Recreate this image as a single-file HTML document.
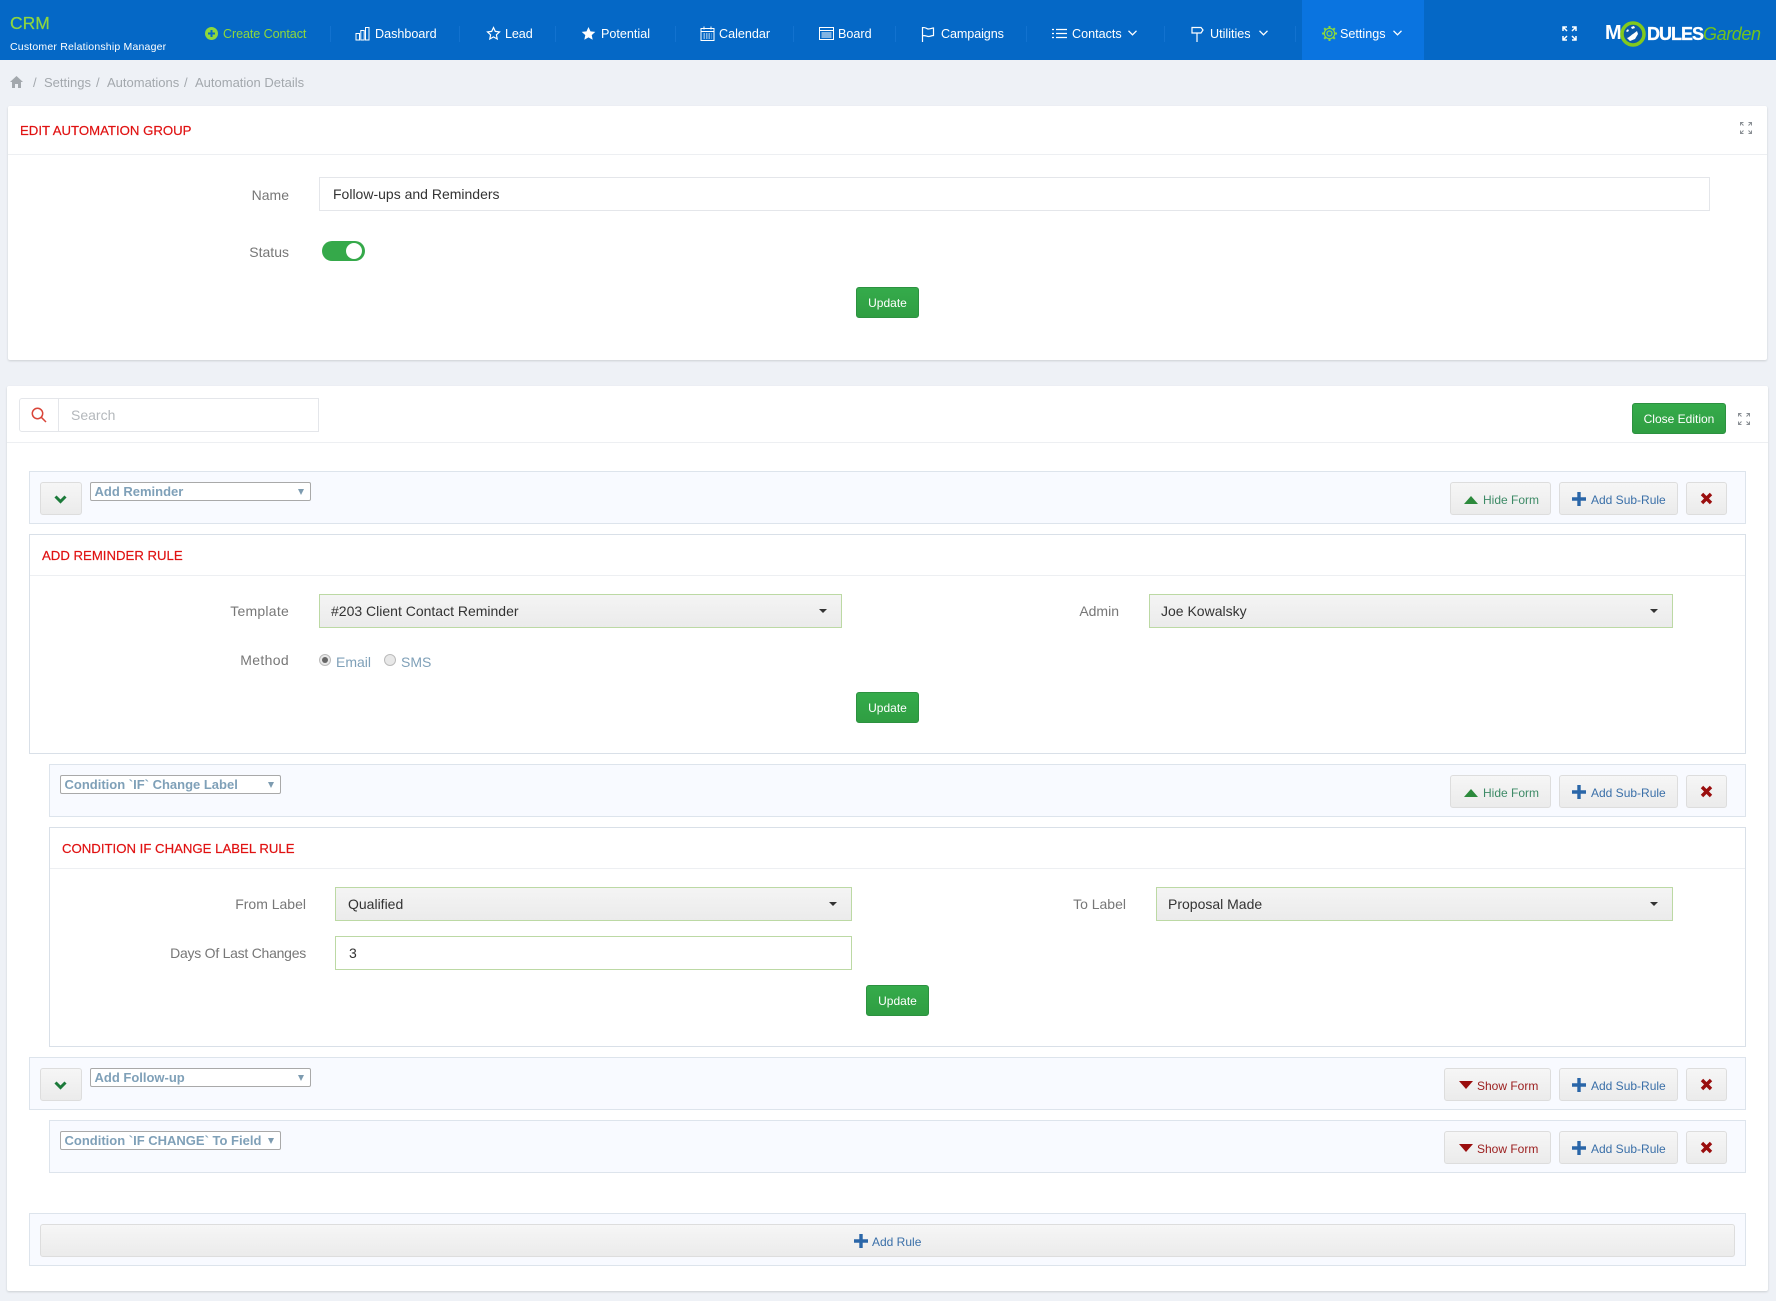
<!DOCTYPE html>
<html lang="en"><head><meta charset="utf-8"><title>CRM - Automation Details</title>
<style>
*{box-sizing:border-box}
html,body{margin:0;padding:0}
body{width:1776px;height:1301px;position:relative;overflow:hidden;background:#eef1f6;font-family:"Liberation Sans",Arial,sans-serif;color:#333}
.a{position:absolute}
.t{position:absolute;white-space:nowrap;height:20px;line-height:20px}
.n{font-size:12.6px;color:#fff}
.d{position:absolute;top:26px;width:1px;height:16px;background:#1272cf}
.b{font-size:13px;color:#a3a8ad}
.card{position:absolute;background:#fff;box-shadow:0 1px 2px rgba(0,0,0,.14);border-radius:2px}
.h{position:absolute;height:1px;background:#edeff2}
.l{font-size:14px;color:#777;text-align:right}
.title{font-size:13.2px;color:#e01212;-webkit-text-stroke:.2px #e01212}
.box{position:absolute;border:1px solid #dde4ec;background:#f8faff}
.pan{position:absolute;border:1px solid #d9e0e8;background:#fff}
.sel{position:absolute;height:34px;border:1px solid #bcd9a4;background:linear-gradient(#f4f4f4,#ebebeb);font-size:14px;color:#333;line-height:32px;padding-left:11px}
.sel i{position:absolute;top:14px;right:14.500px;border-left:4px solid transparent;border-right:4px solid transparent;border-top:4px solid #333}
.ns{position:absolute;height:19px;width:221px;border:1px solid #a9a9a9;border-radius:2px;background:#fff;font-size:13px;font-weight:bold;color:#7fa0b8;line-height:17px;padding-left:3.5px;white-space:nowrap}
.ns i{position:absolute;top:6px;right:6px;border-left:3.5px solid transparent;border-right:3.5px solid transparent;border-top:6px solid #7d9bb0}
.btn{position:absolute;height:33px;border:1px solid #ddd;border-radius:3px;background:linear-gradient(#f6f6f6,#ebebeb);font-size:12px;line-height:31px;white-space:nowrap}
.btn svg{position:absolute}
.btn span{position:absolute;top:1.5px}
.g{position:absolute;background:linear-gradient(#35ab4b,#2f9e42);border:1px solid #2c9140;border-radius:3px;color:#fff;font-size:12px;text-align:center;height:31px;line-height:30px}
.grn{color:#3d8a66}.blu{color:#3a6fa8}.red{color:#9a1c1c}
svg{display:block}
</style></head><body>

<!-- top bar -->
<div class="a" style="left:0;top:0;width:1776px;height:60px;background:#0568c6"></div>
<div class="a" style="left:1302px;top:0;width:122px;height:60px;background:#0a74e0"></div>
<div class="t" style="left:10px;top:13px;font-size:17.500px;color:#8fd63f;-webkit-text-stroke:.2px #8fd63f">CRM</div>
<div class="t" style="left:10px;top:37px;font-size:10.5px;color:#fff;letter-spacing:.2px">Customer Relationship Manager</div>

<svg class="a" style="left:205px;top:27px" width="13" height="13" viewBox="0 0 13 13"><circle cx="6.5" cy="6.5" r="6.5" fill="#8dd83c"/><path d="M6.5 3v7M3 6.5h7" stroke="#0568c6" stroke-width="2"/></svg>
<div class="t n" style="left:223px;top:24px;color:#8dd83c;letter-spacing:-.1px">Create Contact</div>
<div class="d" style="left:330px"></div>
<svg class="a" style="left:355px;top:26px" width="15" height="15" viewBox="0 0 15 15" fill="none" stroke="#fff"><path d="M1 7.500h3.500v6.500H1zM5.800 4.500h3.400v9.500H5.800zM10.500 1.500H14V14h-3.500z"/></svg>
<div class="t n" style="left:375px;top:24px">Dashboard</div>
<div class="d" style="left:459px"></div>
<svg class="a" style="left:486px;top:26px" width="15" height="15" viewBox="0 0 15 15"><path d="M7.500 1.500l1.800 3.900 4.200.5-3.100 2.900.8 4.200-3.700-2.100-3.700 2.100.8-4.200L1.500 5.900l4.200-.5z" fill="none" stroke="#fff" stroke-width="1.200"/></svg>
<div class="t n" style="left:505px;top:24px;letter-spacing:-.1px">Lead</div>
<div class="d" style="left:555px"></div>
<svg class="a" style="left:581px;top:26px" width="15" height="15" viewBox="0 0 15 15"><path d="M7.500 1l2 4.400 4.800.5-3.600 3.200 1 4.700-4.200-2.400-4.200 2.400 1-4.700L.7 5.900l4.800-.5z" fill="#fff"/></svg>
<div class="t n" style="left:601px;top:24px">Potential</div>
<div class="d" style="left:675px"></div>
<svg class="a" style="left:700px;top:26px" width="15" height="15" viewBox="0 0 15 15" fill="none" stroke="#fff"><rect x="1" y="2.500" width="13" height="12"/><path d="M4 .5v3M11 .5v3M1 5.500h13"/><path d="M3.500 8h8M3.500 10h8M3.500 12h8" stroke-dasharray="1.500 1"/></svg>
<div class="t n" style="left:719px;top:24px">Calendar</div>
<div class="d" style="left:793px"></div>
<svg class="a" style="left:819px;top:27px" width="15" height="13" viewBox="0 0 15 13" fill="none" stroke="#fff"><rect x=".5" y=".5" width="14" height="12"/><path d="M.5 3.500h14M2.500 6h10M2.500 8h10M2.500 10h10"/></svg>
<div class="t n" style="left:838px;top:24px">Board</div>
<div class="d" style="left:895px"></div>
<svg class="a" style="left:921px;top:26px" width="15" height="16" viewBox="0 0 15 16" fill="none" stroke="#fff" stroke-width="1.200"><path d="M1.500 1v15M1.500 1.800c3-1 4 1.200 6 1.200 2 0 3.500-1 5-1v7.500c-2 0-3 1-5 1s-3-1.500-6-.7"/></svg>
<div class="t n" style="left:941px;top:24px;letter-spacing:-.1px">Campaigns</div>
<div class="d" style="left:1026px"></div>
<svg class="a" style="left:1052px;top:28px" width="15" height="11" viewBox="0 0 15 11" fill="none" stroke="#fff" stroke-width="1.300"><path d="M0 1.500h2M4 1.500h11M0 5.500h2M4 5.500h11M0 9.500h2M4 9.500h11"/></svg>
<div class="t n" style="left:1072px;top:24px">Contacts</div>
<svg class="a" style="left:1128px;top:30px" width="9" height="6" viewBox="0 0 9 6" fill="none" stroke="#fff" stroke-width="1.300"><path d="M.5.800l4 4 4-4"/></svg>
<div class="d" style="left:1164px"></div>
<svg class="a" style="left:1190px;top:26px" width="14" height="16" viewBox="0 0 14 16" fill="none" stroke="#fff" stroke-width="1.200"><path d="M7 7.500V16M2 1.500h9l2 2.500-2 3H2z"/></svg>
<div class="t n" style="left:1210px;top:24px">Utilities</div>
<svg class="a" style="left:1259px;top:30px" width="9" height="6" viewBox="0 0 9 6" fill="none" stroke="#fff" stroke-width="1.300"><path d="M.5.800l4 4 4-4"/></svg>
<div class="d" style="left:1295px"></div>
<svg class="a" style="left:1322px;top:26px" width="15" height="15" viewBox="0 0 15 15" fill="none" stroke="#8dd83c" stroke-width="1.200"><circle cx="7.500" cy="7.500" r="2.500"/><circle cx="7.500" cy="7.500" r="5.200"/><path stroke-width="2" d="M7.500 0v2.300M7.500 12.700V15M0 7.500h2.300M12.700 7.500H15M2.200 2.200l1.600 1.600M11.200 11.200l1.600 1.600M2.200 12.800l1.600-1.600M11.200 3.800l1.600-1.600"/></svg>
<div class="t n" style="left:1340px;top:24px">Settings</div>
<svg class="a" style="left:1393px;top:30px" width="9" height="6" viewBox="0 0 9 6" fill="none" stroke="#fff" stroke-width="1.300"><path d="M.5.800l4 4 4-4"/></svg>

<svg class="a" style="left:1562px;top:26px" width="15" height="15" viewBox="0 0 15 15" fill="none" stroke="#fff" stroke-width="1.500"><path d="M1 5V1h4M1 1l4 4M14 5V1h-4M14 1l-4 4M1 10v4h4M1 14l4-4M14 10v4h-4M14 14l-4-4"/></svg>

<!-- logo -->
<div class="t" style="left:1605px;top:21px;height:24px;line-height:24px;font-size:20px;font-weight:bold;color:#fff;letter-spacing:-.5px">M</div>
<svg class="a" style="left:1619px;top:20px" width="28" height="28" viewBox="0 0 28 28"><circle cx="14" cy="14" r="11" fill="#0b5aa8" stroke="#82c91e" stroke-width="3.500"/><path d="M8 18c3-1 4-3 6-4l4-3 1 3-3 5-5 2z" fill="#fff"/><path d="M12 7l3-1 1 2-3 1zM7 11l2-2 1 2-2 1z" fill="#fff"/></svg>
<div class="t" style="left:1647px;top:22px;height:24px;line-height:24px;font-size:18px;font-weight:bold;color:#fff;letter-spacing:-1px;-webkit-text-stroke:.3px #fff">DULES</div>
<div class="t" style="left:1703px;top:22px;height:24px;line-height:24px;font-size:18px;font-style:italic;color:#72c21d;letter-spacing:-.4px">Garden</div>

<!-- breadcrumb -->
<svg class="a" style="left:10px;top:76px" width="13" height="12" viewBox="0 0 13 12"><path d="M6.500 0L13 6h-2v6H8V8H5v4H2V6H0z" fill="#a3a8ad"/></svg>
<div class="t b" style="left:33px;top:73px">/</div>
<div class="t b" style="left:44px;top:73px">Settings</div>
<div class="t b" style="left:96px;top:73px">/</div>
<div class="t b" style="left:107px;top:73px">Automations</div>
<div class="t b" style="left:184px;top:73px">/</div>
<div class="t b" style="left:195px;top:73px">Automation Details</div>

<!-- card 1 -->
<div class="card" style="left:8px;top:106px;width:1759px;height:254px"></div>
<div class="h" style="left:8px;top:154px;width:1759px"></div>
<div class="t title" style="left:20px;top:121px">EDIT AUTOMATION GROUP</div>
<svg class="a" style="left:1740px;top:122px" width="12" height="12" viewBox="0 0 12 12" fill="none" stroke="#8a8f94"><path d="M.5 3.500v-3h3M.5.500l3 3M11.500 3.500v-3h-3M11.500.500l-3 3M.5 8.500v3h3M.5 11.500l3-3M11.500 8.500v3h-3M11.500 11.500l-3-3"/></svg>
<div class="t l" style="right:1487px;top:185px">Name</div>
<div class="a" style="left:319px;top:177px;width:1391px;height:34px;border:1px solid #e4e6ea;font-size:14px;line-height:32px;padding-left:13px;color:#333">Follow-ups and Reminders</div>
<div class="t l" style="right:1487px;top:242px">Status</div>
<div class="a" style="left:322px;top:241px;width:43px;height:20px;border-radius:10px;background:#35a94a"></div>
<div class="a" style="left:346px;top:243px;width:16px;height:16px;border-radius:8px;background:#fff"></div>
<div class="g" style="left:856px;top:287px;width:63px">Update</div>

<!-- card 2 -->
<div class="card" style="left:7px;top:386px;width:1761px;height:905px"></div>
<div class="h" style="left:7px;top:442px;width:1761px"></div>
<div class="a" style="left:19px;top:398px;width:300px;height:34px;border:1px solid #e4e6ea;border-radius:3px 0 0 3px"></div>
<div class="a" style="left:58px;top:398px;width:1px;height:34px;background:#e4e6ea"></div>
<svg class="a" style="left:31px;top:407px" width="16" height="16" viewBox="0 0 16 16" fill="none" stroke="#d9463a" stroke-width="1.500"><circle cx="6.500" cy="6.500" r="5.200"/><path d="M10.300 10.300l4.700 4.700"/></svg>
<div class="t" style="left:71px;top:405px;font-size:14px;color:#b4b8bc">Search</div>
<div class="g" style="left:1632px;top:403px;width:94px;height:31px;line-height:30px">Close Edition</div>
<svg class="a" style="left:1738px;top:413px" width="12" height="12" viewBox="0 0 12 12" fill="none" stroke="#8a8f94"><path d="M.5 3.500v-3h3M.5.500l3 3M11.500 3.500v-3h-3M11.500.500l-3 3M.5 8.500v3h3M.5 11.500l3-3M11.500 8.500v3h-3M11.500 11.500l-3-3"/></svg>

<!-- row 1 -->
<div class="box" style="left:29px;top:471px;width:1717px;height:53px"></div>
<div class="btn" style="left:40px;top:482px;width:42px"><svg style="left:13px;top:12px" width="13" height="9" viewBox="0 0 13 9"><path d="M1.500 1.500l5 5 5-5" fill="none" stroke="#1c7a3a" stroke-width="3"/></svg></div>
<div class="ns" style="left:90px;top:482px">Add Reminder<i></i></div>
<div class="btn grn" style="left:1450px;top:482px;width:101px"><svg style="left:13px;top:13px" width="14" height="8" viewBox="0 0 14 8"><path d="M7 0l7 8H0z" fill="#2c8a3c"/></svg><span style="left:32px">Hide Form</span></div>
<div class="btn blu" style="left:1559px;top:482px;width:119px"><svg style="left:12px;top:9px" width="14" height="14" viewBox="0 0 14 14"><path d="M7 0v14M0 7h14" stroke="#2a66a8" stroke-width="3.400"/></svg><span style="left:31px">Add Sub-Rule</span></div>
<div class="btn" style="left:1686px;top:482px;width:41px"><svg style="left:13px;top:9px" width="13" height="13" viewBox="0 0 13 13"><path d="M2 2l9 9M11 2l-9 9" stroke="#9a0e0e" stroke-width="3.400"/></svg></div>

<!-- add reminder panel -->
<div class="pan" style="left:29px;top:534px;width:1717px;height:220px"></div>
<div class="h" style="left:30px;top:575px;width:1715px"></div>
<div class="t title" style="left:42px;top:546px">ADD REMINDER RULE</div>
<div class="t l" style="right:1487px;top:601px;letter-spacing:.25px">Template</div>
<div class="sel" style="left:319px;top:594px;width:523px">#203 Client Contact Reminder<i></i></div>
<div class="t l" style="right:657px;top:601px">Admin</div>
<div class="sel" style="left:1149px;top:594px;width:524px">Joe Kowalsky<i></i></div>
<div class="t l" style="right:1487px;top:650px;letter-spacing:.35px">Method</div>
<div class="a" style="left:319px;top:654px;width:12px;height:12px;border-radius:6px;border:1px solid #bbb;background:#e8e8e8"></div>
<div class="a" style="left:322px;top:657px;width:6px;height:6px;border-radius:3px;background:#666"></div>
<div class="t" style="left:336px;top:652px;font-size:14px;color:#7fa0b8">Email</div>
<div class="a" style="left:384px;top:654px;width:12px;height:12px;border-radius:6px;border:1px solid #bbb;background:#e8e8e8"></div>
<div class="t" style="left:401px;top:652px;font-size:14px;color:#7fa0b8">SMS</div>
<div class="g" style="left:856px;top:692px;width:63px">Update</div>

<!-- condition row -->
<div class="box" style="left:49px;top:764px;width:1697px;height:53px"></div>
<div class="ns" style="left:60px;top:775px">Condition `IF` Change Label<i></i></div>
<div class="btn grn" style="left:1450px;top:775px;width:101px"><svg style="left:13px;top:13px" width="14" height="8" viewBox="0 0 14 8"><path d="M7 0l7 8H0z" fill="#2c8a3c"/></svg><span style="left:32px">Hide Form</span></div>
<div class="btn blu" style="left:1559px;top:775px;width:119px"><svg style="left:12px;top:9px" width="14" height="14" viewBox="0 0 14 14"><path d="M7 0v14M0 7h14" stroke="#2a66a8" stroke-width="3.400"/></svg><span style="left:31px">Add Sub-Rule</span></div>
<div class="btn" style="left:1686px;top:775px;width:41px"><svg style="left:13px;top:9px" width="13" height="13" viewBox="0 0 13 13"><path d="M2 2l9 9M11 2l-9 9" stroke="#9a0e0e" stroke-width="3.400"/></svg></div>

<!-- condition panel -->
<div class="pan" style="left:49px;top:827px;width:1697px;height:220px"></div>
<div class="h" style="left:50px;top:868px;width:1695px"></div>
<div class="t title" style="left:62px;top:839px">CONDITION IF CHANGE LABEL RULE</div>
<div class="t l" style="right:1470px;top:894px">From Label</div>
<div class="sel" style="left:335px;top:887px;width:517px;padding-left:12px">Qualified<i></i></div>
<div class="t l" style="right:650px;top:894px">To Label</div>
<div class="sel" style="left:1156px;top:887px;width:517px">Proposal Made<i></i></div>
<div class="t l" style="right:1470px;top:943px;letter-spacing:-.25px">Days Of Last Changes</div>
<div class="a" style="left:335px;top:936px;width:517px;height:34px;border:1px solid #bcd9a4;font-size:14px;line-height:32px;padding-left:13px;color:#333;background:#fff">3</div>
<div class="g" style="left:866px;top:985px;width:63px">Update</div>

<!-- row 3 -->
<div class="box" style="left:29px;top:1057px;width:1717px;height:53px"></div>
<div class="btn" style="left:40px;top:1068px;width:42px"><svg style="left:13px;top:12px" width="13" height="9" viewBox="0 0 13 9"><path d="M1.500 1.500l5 5 5-5" fill="none" stroke="#1c7a3a" stroke-width="3"/></svg></div>
<div class="ns" style="left:90px;top:1068px">Add Follow-up<i></i></div>
<div class="btn red" style="left:1444px;top:1068px;width:107px"><svg style="left:14px;top:12px" width="14" height="8" viewBox="0 0 14 8"><path d="M0 0h14L7 8z" fill="#9a0e0e"/></svg><span style="left:32px">Show Form</span></div>
<div class="btn blu" style="left:1559px;top:1068px;width:119px"><svg style="left:12px;top:9px" width="14" height="14" viewBox="0 0 14 14"><path d="M7 0v14M0 7h14" stroke="#2a66a8" stroke-width="3.400"/></svg><span style="left:31px">Add Sub-Rule</span></div>
<div class="btn" style="left:1686px;top:1068px;width:41px"><svg style="left:13px;top:9px" width="13" height="13" viewBox="0 0 13 13"><path d="M2 2l9 9M11 2l-9 9" stroke="#9a0e0e" stroke-width="3.400"/></svg></div>

<!-- row 4 -->
<div class="box" style="left:49px;top:1120px;width:1697px;height:53px"></div>
<div class="ns" style="left:60px;top:1131px">Condition `IF CHANGE` To Field<i></i></div>
<div class="btn red" style="left:1444px;top:1131px;width:107px"><svg style="left:14px;top:12px" width="14" height="8" viewBox="0 0 14 8"><path d="M0 0h14L7 8z" fill="#9a0e0e"/></svg><span style="left:32px">Show Form</span></div>
<div class="btn blu" style="left:1559px;top:1131px;width:119px"><svg style="left:12px;top:9px" width="14" height="14" viewBox="0 0 14 14"><path d="M7 0v14M0 7h14" stroke="#2a66a8" stroke-width="3.400"/></svg><span style="left:31px">Add Sub-Rule</span></div>
<div class="btn" style="left:1686px;top:1131px;width:41px"><svg style="left:13px;top:9px" width="13" height="13" viewBox="0 0 13 13"><path d="M2 2l9 9M11 2l-9 9" stroke="#9a0e0e" stroke-width="3.400"/></svg></div>

<!-- add rule -->
<div class="box" style="left:29px;top:1213px;width:1717px;height:53px"></div>
<div class="btn blu" style="left:40px;top:1224px;width:1695px;height:33px"><svg style="left:813px;top:9px" width="14" height="14" viewBox="0 0 14 14"><path d="M7 0v14M0 7h14" stroke="#2a66a8" stroke-width="3.400"/></svg><span style="left:831px">Add Rule</span></div>

</body></html>
